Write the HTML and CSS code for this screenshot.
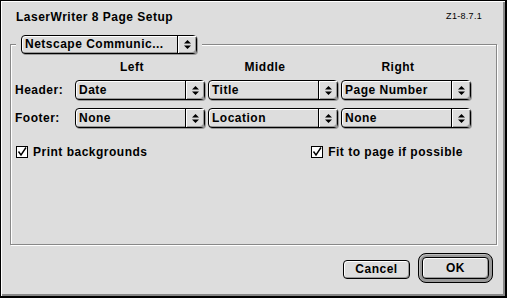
FILE: index.html
```html
<!DOCTYPE html>
<html lang="en">
<head>
    <meta charset="UTF-8">
    <title>LaserWriter 8 Page Setup</title>
    <link rel="stylesheet" href="styles.css">
</head>
<body>
    <div class="dialog">
        <div class="title-row">
            <h1>LaserWriter 8 Page Setup</h1>
            <span class="version">Z1-8.7.1</span>
        </div>

        <fieldset class="group">
            <legend>
                <div class="popup popup-legend">
                    <span class="value">Netscape Communic...</span>
                    <span class="arrows"><svg width="7" height="11" viewBox="0 0 7 11"><path d="M0 4.5L3.5 1L7 4.5Z M0 6.5L3.5 10L7 6.5Z" fill="#000"/></svg></span>
                </div>
            </legend>

            <div class="grid">
                <span></span>
                <span class="col-head">Left</span>
                <span class="col-head">Middle</span>
                <span class="col-head">Right</span>

                <label class="row-label">Header:</label>
                <div class="popup">
                    <span class="value">Date</span>
                    <span class="arrows"><svg width="7" height="11" viewBox="0 0 7 11"><path d="M0 4.5L3.5 1L7 4.5Z M0 6.5L3.5 10L7 6.5Z" fill="#000"/></svg></span>
                </div>
                <div class="popup">
                    <span class="value">Title</span>
                    <span class="arrows"><svg width="7" height="11" viewBox="0 0 7 11"><path d="M0 4.5L3.5 1L7 4.5Z M0 6.5L3.5 10L7 6.5Z" fill="#000"/></svg></span>
                </div>
                <div class="popup">
                    <span class="value">Page Number</span>
                    <span class="arrows"><svg width="7" height="11" viewBox="0 0 7 11"><path d="M0 4.5L3.5 1L7 4.5Z M0 6.5L3.5 10L7 6.5Z" fill="#000"/></svg></span>
                </div>

                <label class="row-label">Footer:</label>
                <div class="popup">
                    <span class="value">None</span>
                    <span class="arrows"><svg width="7" height="11" viewBox="0 0 7 11"><path d="M0 4.5L3.5 1L7 4.5Z M0 6.5L3.5 10L7 6.5Z" fill="#000"/></svg></span>
                </div>
                <div class="popup">
                    <span class="value">Location</span>
                    <span class="arrows"><svg width="7" height="11" viewBox="0 0 7 11"><path d="M0 4.5L3.5 1L7 4.5Z M0 6.5L3.5 10L7 6.5Z" fill="#000"/></svg></span>
                </div>
                <div class="popup">
                    <span class="value">None</span>
                    <span class="arrows"><svg width="7" height="11" viewBox="0 0 7 11"><path d="M0 4.5L3.5 1L7 4.5Z M0 6.5L3.5 10L7 6.5Z" fill="#000"/></svg></span>
                </div>
            </div>

            <div class="checks">
                <label class="check">
                    <svg width="12" height="12" viewBox="0 0 12 12"><rect x="0.5" y="0.5" width="11" height="11" fill="#fff" stroke="#000"/><path d="M2.5 5.5L5 9L10 1.5" fill="none" stroke="#000" stroke-width="1.4"/></svg>
                    Print backgrounds
                </label>
                <label class="check">
                    <svg width="12" height="12" viewBox="0 0 12 12"><rect x="0.5" y="0.5" width="11" height="11" fill="#fff" stroke="#000"/><path d="M2.5 5.5L5 9L10 1.5" fill="none" stroke="#000" stroke-width="1.4"/></svg>
                    Fit to page if possible
                </label>
            </div>
        </fieldset>

        <div class="buttons">
            <button class="btn btn-cancel">Cancel</button>
            <span class="default-ring"><button class="btn btn-ok">OK</button></span>
        </div>
    </div>
</body>
</html>
```

FILE: styles.css
```css
body,div,h1,fieldset,legend,button {
    margin: 0;
    padding: 0;
}
body{
    background: #ddd;
    font-family: "Liberation Sans", Arial, sans-serif;
    font-size: 12px;
    letter-spacing: 0.5px;
    color: #000;
}
.dialog{
    width: 507px;
    height: 298px;
    box-sizing: border-box;
    background: #ddd;
    border: 1px solid #000;
    border-right-width: 2px;
    border-bottom-width: 2px;
    box-shadow: inset 1px 1px #fff, inset -2px -2px #888;
    padding: 9px 8px 0 9px;
    display: flex;
    flex-direction: column;
}
.title-row{
    display: flex;
    justify-content: space-between;
    align-items: flex-start;
    padding: 0 15px 0 6px;
    line-height: 15px;
}
.title-row h1{
    font-size: 12px;
    font-weight: 700;
}
.title-row .version{
    font-size: 9px;
    line-height: 12px;
    letter-spacing: 0.3px;
}
.group{
    margin-top: 10px;
    border: 1px solid #888;
    box-shadow: inset 1px 1px #fff, 1px 1px #fff;
    padding: 6px 0 0 3px;
    height: 210px;
    box-sizing: border-box;
}
.group legend{
    margin-left: 2px;
    padding: 0 5px;
    background: #ddd;
}
.popup{
    display: flex;
    height: 20px;
    box-sizing: border-box;
    border: 1px solid #000;
    border-radius: 4px;
    background: #ddd;
    box-shadow: inset 1px 1px #fff, inset -1px -1px #999, 1px 1px #999;
    font-weight: 700;
    line-height: 18px;
}
.popup-legend{
    width: 176px;
    height: 19px;
    line-height: 17px;
}
.popup .value{
    flex: 1;
    padding-left: 3px;
    white-space: nowrap;
    overflow: hidden;
}
.popup .arrows{
    width: 18px;
    border-left: 1px solid #000;
    display: flex;
    align-items: center;
    justify-content: center;
    box-shadow: inset 1px 1px #fff, inset -1px -1px #999;
}
.grid{
    display: grid;
    grid-template-columns: 58px repeat(3, 130px);
    column-gap: 3px;
    row-gap: 8px;
    align-items: center;
}
.col-head{
    font-weight: 700;
    text-align: center;
    padding-right: 16px;
    line-height: 15px;
    margin-bottom: -3px;
}
.row-label{
    font-weight: 700;
    padding-left: 1px;
}
.checks{
    display: flex;
    justify-content: space-between;
    padding: 0 33px 0 2px;
    margin-top: 17px;
}
.check{
    display: flex;
    align-items: center;
    gap: 5px;
    font-weight: 700;
    line-height: 14px;
}
.buttons{
    display: flex;
    justify-content: flex-end;
    align-items: center;
    gap: 8px;
    padding-right: 4px;
    margin-top: 8px;
}
.btn{
    font-family: "Liberation Sans", Arial, sans-serif;
    font-size: 12px;
    font-weight: 700;
    letter-spacing: 0.5px;
    color: #000;
    background: #ddd;
    border: 1px solid #000;
    border-radius: 4px;
    box-shadow: inset 1px 1px #fff, inset -1px -1px #999;
    height: 19px;
    line-height: 17px;
}
.btn-cancel{
    width: 67px;
    margin-top: 3px;
}
.default-ring{
    display: flex;
    border: 1px solid #000;
    border-radius: 8px;
    padding: 3px;
    background: #999;
    box-shadow: inset 1px 1px #bbb;
}
.btn-ok{
    width: 67px;
    height: 22px;
}
```
